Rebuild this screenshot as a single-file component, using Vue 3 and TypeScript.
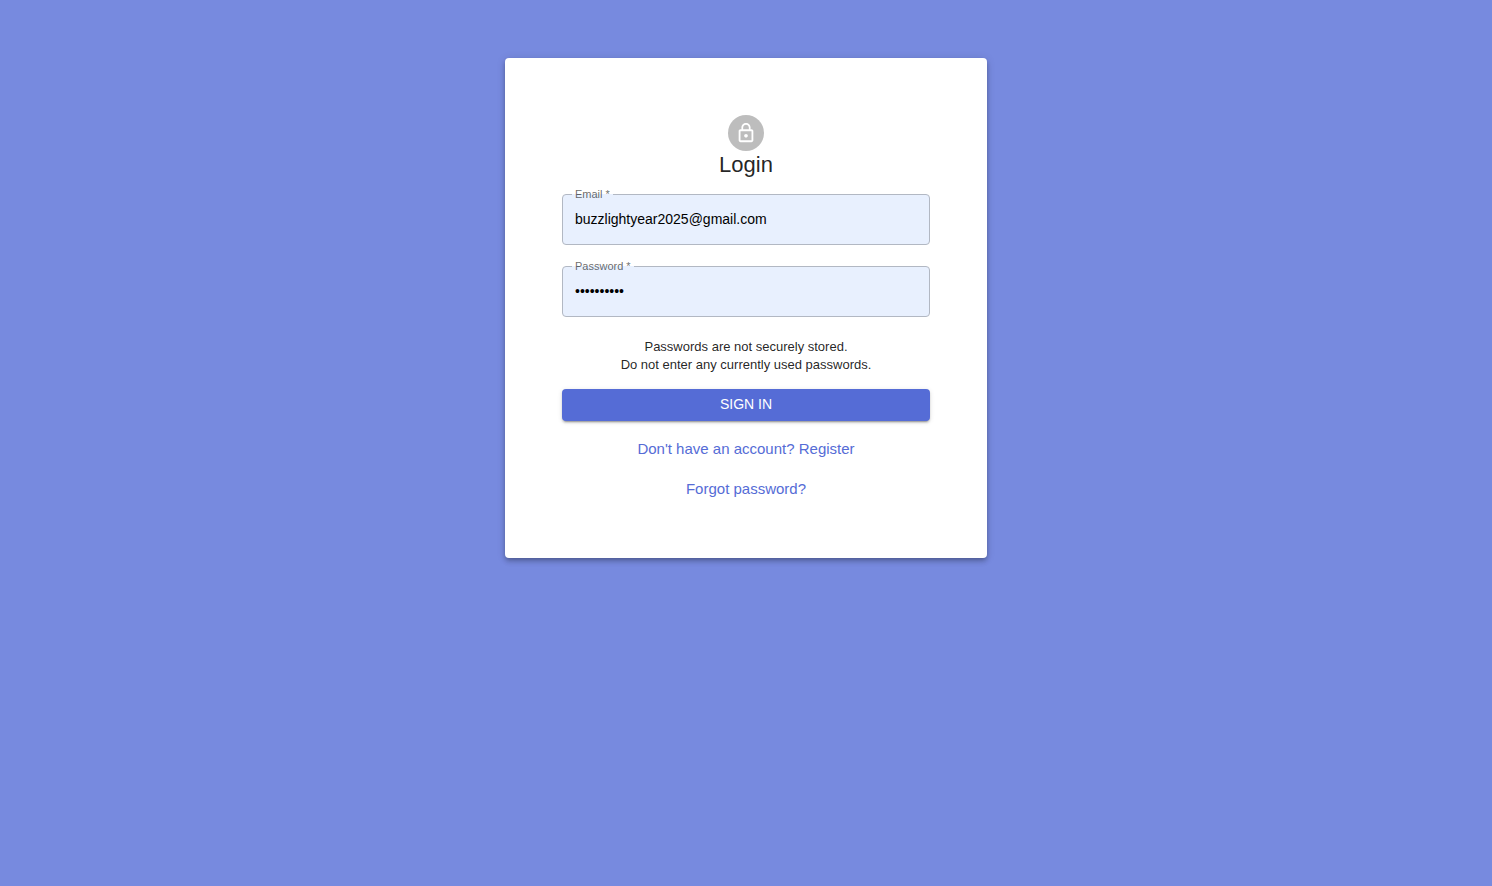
<script setup lang="ts">
import { ref } from 'vue'

const email = ref('buzzlightyear2025@gmail.com')
const password = ref('toinfinity')
</script>

<template>
  <main class="page">
    <section class="card">
      <div class="avatar">
        <svg viewBox="0 0 24 24" aria-hidden="true">
          <path d="M12 17c1.100 0 2-.9 2-2s-.9-2-2-2-2 .9-2 2 .9 2 2 2zm6-9h-1V6c0-2.760-2.240-5-5-5S7 3.240 7 6v2H6c-1.100 0-2 .9-2 2v10c0 1.100.9 2 2 2h12c1.100 0 2-.9 2-2V10c0-1.100-.9-2-2-2zM8.900 6c0-1.710 1.390-3.100 3.100-3.100s3.100 1.390 3.100 3.100v2H8.900V6zM18 20H6V10h12v10z" />
        </svg>
      </div>
      <h1>Login</h1>
      <form @submit.prevent>
        <div class="field">
          <label for="email">Email *</label>
          <input id="email" v-model="email" type="email" required />
        </div>
        <div class="field">
          <label for="password">Password *</label>
          <input id="password" v-model="password" type="password" required />
        </div>
        <p class="notice">Passwords are not securely stored.<br />Do not enter any currently used passwords.</p>
        <button type="submit">SIGN IN</button>
      </form>
      <nav class="links">
        <a href="#register">Don't have an account? Register</a>
        <a href="#forgot">Forgot password?</a>
      </nav>
    </section>
  </main>
</template>

<style>
body {
  background: #778adf;
}
</style>

<style scoped>
.page {
  display: flex;
  justify-content: center;
  padding: 58px 16px;
  font-family: "Liberation Sans", Arial, sans-serif;
  color: rgba(0, 0, 0, 0.87);
}

.card {
  box-sizing: border-box;
  width: 100%;
  max-width: 482px;
  padding: 57px 57px 59px;
  display: flex;
  flex-direction: column;
  align-items: center;
  background: #fff;
  border-radius: 4px;
  box-shadow: 0 2px 4px -1px rgba(0, 0, 0, 0.2), 0 4px 5px rgba(0, 0, 0, 0.14), 0 1px 10px rgba(0, 0, 0, 0.12);
}

.avatar {
  width: 36px;
  height: 36px;
  display: grid;
  place-items: center;
  border-radius: 50%;
  background: #bdbdbd;
}

.avatar svg {
  width: 22px;
  height: 22px;
  fill: #fff;
}

h1 {
  margin: 0;
  font-size: 22px;
  line-height: 28px;
  font-weight: 400;
}

form {
  width: 100%;
  display: flex;
  flex-direction: column;
}

.field {
  position: relative;
  margin: 15px 0 6px;
}

.field label {
  position: absolute;
  top: -6px;
  left: 10px;
  padding: 0 3px;
  font-size: 11px;
  line-height: 12px;
  color: rgba(0, 0, 0, 0.6);
  background: linear-gradient(#fff 6px, #e8f0fe 6px);
}

.field input {
  display: block;
  box-sizing: border-box;
  width: 100%;
  height: 51px;
  padding: 0 12px 2px;
  border: 1px solid #b2b8c3;
  border-radius: 4px;
  outline: 0;
  background: #e8f0fe;
  color: #000;
  font: 14px/20px "Liberation Sans", Arial, sans-serif;
}

.notice {
  margin: 15px 0;
  font-size: 13px;
  line-height: 18px;
  text-align: center;
}

button {
  height: 32px;
  border: 0;
  border-radius: 4px;
  padding: 0 16px 2px;
  background: #556cd6;
  color: #fff;
  font: 14px/24px "Liberation Sans", Arial, sans-serif;
  box-shadow: 0 3px 1px -2px rgba(0, 0, 0, 0.2), 0 2px 2px rgba(0, 0, 0, 0.14), 0 1px 5px rgba(0, 0, 0, 0.12);
}

.links {
  margin-top: 18px;
  display: flex;
  flex-direction: column;
  align-items: center;
  gap: 20px;
}

.links a {
  font-size: 15px;
  line-height: 20px;
  color: #556cd6;
  text-decoration: none;
}
</style>
